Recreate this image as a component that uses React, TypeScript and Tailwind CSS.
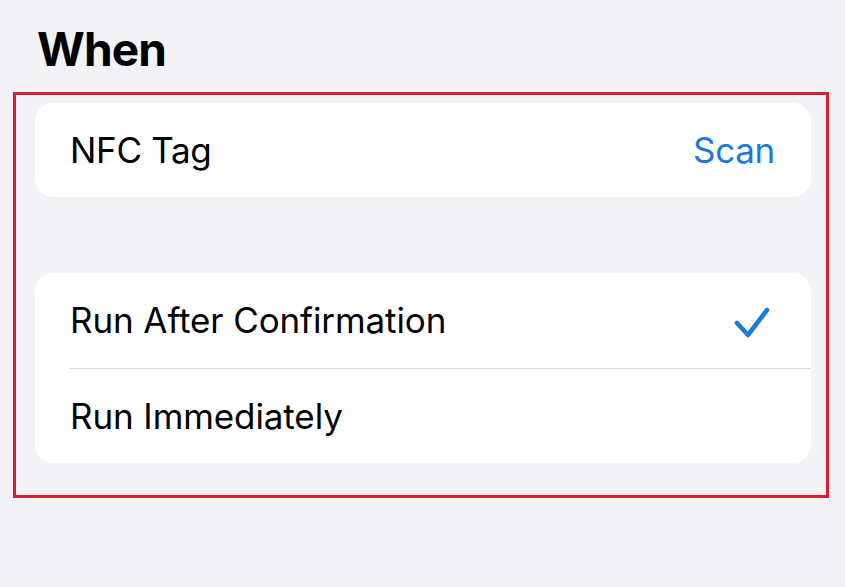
import React from "react";

const Check = () => (
  <svg width="38" height="34" viewBox="0 0 38 34" fill="none" className="shrink-0">
    <path
      d="M4 19 L15 31 L34 6"
      stroke="#1c7ad9"
      strokeWidth="4.6"
      strokeLinecap="round"
      strokeLinejoin="round"
    />
  </svg>
);

const App = () => {
  return (
    <div
      className="w-[845px] h-[587px] bg-[#f2f2f7] text-black overflow-hidden"
      style={{ fontFamily: "Inter, 'Liberation Sans', sans-serif" }}
    >
      <h1 className="pt-[26px] pl-[37px] text-[46px] font-bold leading-none tracking-[-0.8px]">
        When
      </h1>

      <div className="mt-[20px] ml-[13px] w-[816px] h-[406px] border-[3px] border-[#d5202f] pt-[8px] pl-[19px] pr-[15px]">
        <div className="h-[94px] bg-white rounded-[18px] flex items-center justify-between pl-[35px] pr-[36px]">
          <span className="text-[35px] tracking-[-0.3px]">NFC Tag</span>
          <span className="text-[35px] text-[#1c7ad9] tracking-[-0.3px]">Scan</span>
        </div>

        <div className="mt-[76px] bg-white rounded-[18px] flex flex-col">
          <div className="h-[95px] flex items-center justify-between pl-[35px] pr-[40px]">
            <span className="text-[35px] tracking-[-0.1px]">Run After Confirmation</span>
            <Check />
          </div>
          <div className="ml-[35px] h-px bg-[#d9d9de]" />
          <div className="h-[94px] flex items-center pl-[35px]">
            <span className="text-[35px] tracking-[-0.1px]">Run Immediately</span>
          </div>
        </div>
      </div>
    </div>
  );
};

export default App;
